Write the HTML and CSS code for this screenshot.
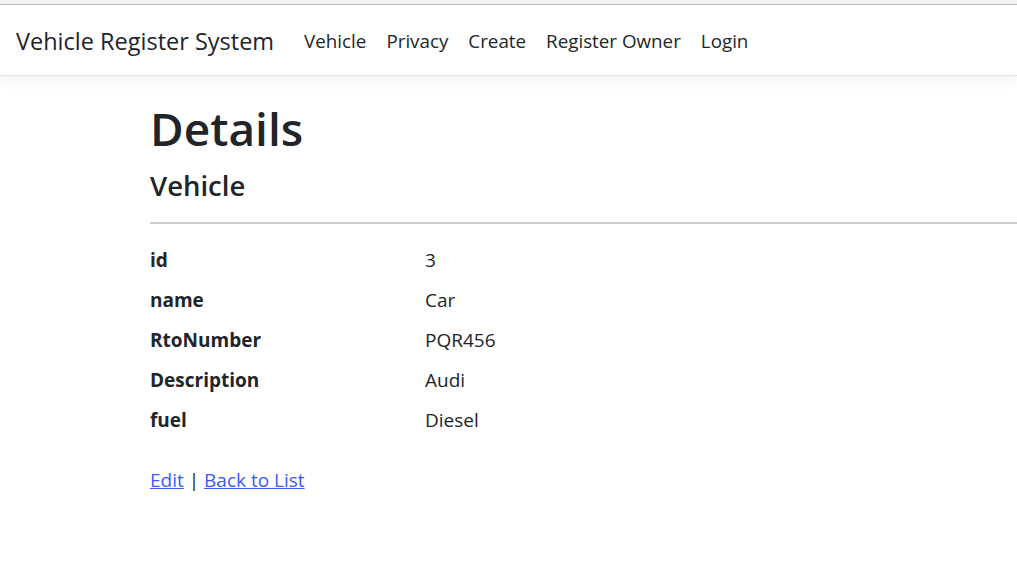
FILE: index.html
```html
<!DOCTYPE html>
<html lang="en">
<head>
<meta charset="utf-8">
<title>Details - Vehicle Register System</title>
<link rel="stylesheet" href="styles.css">
</head>
<body>
<div class="chrome-strip"></div>
<header class="navbar">
  <a class="brand" href="#">Vehicle Register System</a>
  <nav class="nav">
    <a class="nav-link" href="#">Vehicle</a>
    <a class="nav-link" href="#">Privacy</a>
    <a class="nav-link" href="#">Create</a>
    <a class="nav-link" href="#">Register Owner</a>
    <a class="nav-link" href="#">Login</a>
  </nav>
</header>
<main class="main">
  <h1 class="title">Details</h1>
  <div>
    <h4 class="subtitle">Vehicle</h4>
    <hr class="rule">
    <dl class="details">
      <dt>id</dt><dd>3</dd>
      <dt>name</dt><dd>Car</dd>
      <dt>RtoNumber</dt><dd>PQR456</dd>
      <dt>Description</dt><dd>Audi</dd>
      <dt>fuel</dt><dd>Diesel</dd>
    </dl>
  </div>
  <div class="actions">
    <a href="#">Edit</a> | <a href="#">Back to List</a>
  </div>
</main>
</body>
</html>
```
FILE: styles.css
```css
* { box-sizing: border-box; }
html, body {
  margin: 0;
  padding: 0;
  background: #fff;
}
body {
  font-family: "Open Sans", "Noto Sans", "Liberation Sans", sans-serif;
  font-size: 19px;
  line-height: 30px;
  color: #212529;
  overflow: hidden;
}
.chrome-strip {
  height: 5px;
  background: #f3f3f3;
  border-bottom: 1px solid #bdbdbd;
}
.navbar {
  display: flex;
  align-items: center;
  height: 71px;
  padding: 2px 16px 0;
  background: #fff;
  border-bottom: 1px solid #e3e3e3;
  box-shadow: 0 5px 15px rgba(0, 0, 0, 0.05);
  position: relative;
}
.brand {
  font-size: 23.5px;
  color: #212529;
  text-decoration: none;
  margin-right: 20px;
  white-space: nowrap;
}
.nav {
  display: flex;
  font-size: 18.8px;
}
.nav-link {
  padding: 0 10px;
  color: #212529;
  text-decoration: none;
  white-space: nowrap;
}
.main {
  padding: 25px 0 0 150px;
}
.title {
  margin: 0;
  font-size: 46px;
  font-weight: 600;
  line-height: 1.2;
}
.subtitle {
  margin: 13px 0 0;
  font-size: 27.5px;
  font-weight: 600;
  line-height: 1.2;
}
.rule {
  margin: 20px 0 21px;
  border: 0;
  border-top: 2px solid #cccccc;
}
.details {
  display: grid;
  grid-template-columns: 275px 1fr;
  margin: 0 0 20px;
}
.details dt {
  font-weight: 700;
  margin-bottom: 10px;
}
.details dd {
  margin: 0 0 10px;
}
.actions a {
  color: #3b5bf5;
  text-decoration: underline;
}
```
